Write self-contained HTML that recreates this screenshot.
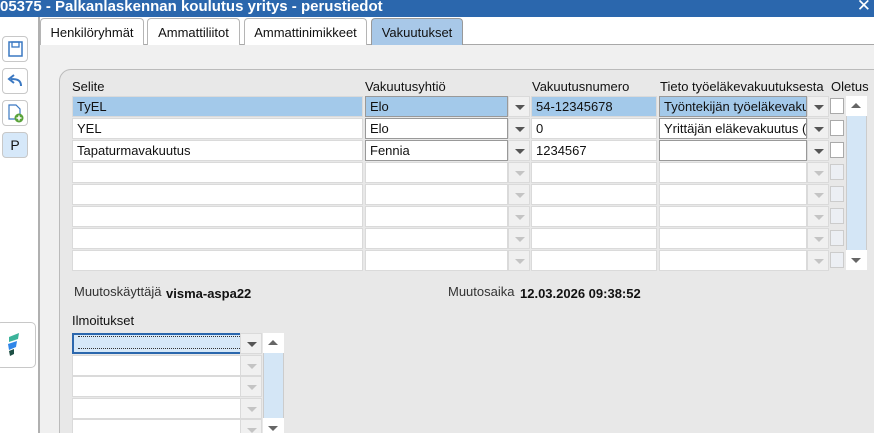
<!DOCTYPE html><html><head><meta charset="utf-8"><style>
*{box-sizing:border-box;margin:0;padding:0}
html,body{width:874px;height:433px;overflow:hidden}
body{background:#fff;font-family:"Liberation Sans",Arial,sans-serif;font-size:13px;color:#111;position:relative}
.a{position:absolute}
.title{left:0;top:0;width:874px;height:17px;background:#2b67ad;color:#fff;font-weight:bold;font-size:15px;line-height:14px;padding-left:0;white-space:nowrap;overflow:hidden}
.tab{top:18px;height:27px;border:1px solid #b5b5b5;border-bottom:none;border-radius:4px 4px 0 0;background:#fff;text-align:center;line-height:27px;font-size:13px}
.btn{left:2px;width:26px;height:26px;border:1px solid #c8c8c8;border-radius:4px;background:#fff}
.cell{height:21px;background:#fff;border:1px solid #dadada;line-height:19px;padding-left:4px;white-space:nowrap;overflow:hidden}
.dd{height:21px;width:22px;background:#f0f0f0;border:1px solid #dadada}
.dd::after{content:"";position:absolute;left:6px;top:8px;border-left:5px solid transparent;border-right:5px solid transparent;border-top:5px solid #555}
.dd.dis::after{border-top-color:#c4c4c4}
.cb{width:14px;height:16px;border:1px solid #aaa;background:#fff}
.cb.dis{background:#eceff4;border-color:#ccc}
</style></head><body>
<div class="a title">05375 - Palkanlaskennan koulutus yritys - perustiedot<span style="position:absolute;right:3px;top:-1px;font-weight:normal;font-size:17px">✕</span></div>
<div class="a" style="left:38px;top:17px;width:2px;height:416px;background:#b0b0b0"></div>
<div class="a btn" style="top:36px"><svg width="24" height="24"><rect x="6" y="5" width="13" height="14" fill="none" stroke="#3a78c2" stroke-width="1.5"/><rect x="9" y="5" width="7" height="5" fill="none" stroke="#3a78c2" stroke-width="1.3"/></svg></div>
<div class="a btn" style="top:68px"><svg width="24" height="24"><path d="M18 17 C18 11 14 10 8 10 M11 6 L6 10 L11 14" fill="none" stroke="#3a78c2" stroke-width="2"/></svg></div>
<div class="a btn" style="top:100px"><svg width="24" height="24"><path d="M6 4h7l4 4v10H6z" fill="#fff" stroke="#3a78c2" stroke-width="1.2"/><circle cx="16" cy="17" r="4.5" fill="#5aa33a"/><path d="M16 14.5v5M13.5 17h5" stroke="#fff" stroke-width="1.5"/></svg></div>
<div class="a btn" style="top:132px;background:#d6e8f9;text-align:center;line-height:24px;font-size:14px">P</div>
<div class="a" style="left:-4px;top:322px;width:40px;height:46px;border:1px solid #c8c8c8;border-radius:5px;background:#fff"><svg width="40" height="46"><path d="M12 14 L22 10 L21 16 L12 19Z" fill="#3bb39a"/><path d="M11 21 L20 18 L19 24 L12 27Z" fill="#2f86e8"/><path d="M12 28 L17 26 L17 31 L13 33Z" fill="#1e4f45"/></svg></div>
<div class="a" style="left:40px;top:44px;width:834px;height:1px;background:#a8a8a8"></div>
<div class="a tab" style="left:40px;width:104px">Henkilöryhmät</div>
<div class="a tab" style="left:147px;width:93px">Ammattiliitot</div>
<div class="a tab" style="left:244px;width:123px">Ammattinimikkeet</div>
<div class="a tab" style="left:371px;width:92px;background:#a8c8e8;border-color:#999">Vakuutukset</div>
<div class="a" style="left:40px;top:45px;width:834px;height:388px;background:#f0f0f0"></div>
<div class="a" style="left:59px;top:69px;width:830px;height:370px;background:#e8e8e8;border:1px solid #bbb;border-radius:12px 0 0 0"></div>
<div class="a" style="left:72px;top:79px">Selite</div>
<div class="a" style="left:365px;top:79px">Vakuutusyhtiö</div>
<div class="a" style="left:532px;top:79px">Vakuutusnumero</div>
<div class="a" style="left:660px;top:79px">Tieto työeläkevakuutuksesta</div>
<div class="a" style="left:831px;top:79px">Oletus</div>
<div id="g"></div>
<div class="a" style="left:846px;top:96px;width:21px;height:174px;background:#d4e6f6;border:1px solid #ccc"></div>
<div class="a" style="left:846px;top:96px;width:21px;height:20px;background:#fff"><div class="a" style="left:5px;top:7px;border-left:5px solid transparent;border-right:5px solid transparent;border-bottom:5px solid #666"></div></div>
<div class="a" style="left:846px;top:250px;width:21px;height:20px;background:#fff"><div class="a" style="left:5px;top:8px;border-left:5px solid transparent;border-right:5px solid transparent;border-top:5px solid #666"></div></div>
<div class="a" style="left:74px;top:284px;color:#333">Muutoskäyttäjä</div>
<div class="a" style="left:166px;top:286px;font-weight:bold">visma-aspa22</div>
<div class="a" style="left:448px;top:284px;color:#333">Muutosaika</div>
<div class="a" style="left:520px;top:286px;font-weight:bold">12.03.2026 09:38:52</div>
<div class="a" style="left:72px;top:313px">Ilmoitukset</div>
<div id="h"></div>
<div class="a" style="left:263px;top:333px;width:21px;height:100px;background:#d4e6f6;border:1px solid #ccc"></div>
<div class="a" style="left:263px;top:333px;width:21px;height:20px;background:#fff"><div class="a" style="left:5px;top:7px;border-left:5px solid transparent;border-right:5px solid transparent;border-bottom:5px solid #666"></div></div>
<div class="a" style="left:263px;top:418px;width:21px;height:20px;background:#fff"><div class="a" style="left:5px;top:8px;border-left:5px solid transparent;border-right:5px solid transparent;border-top:5px solid #666"></div></div>
<script>
var rows=[["TyEL","Elo","54-12345678","Työntekijän työeläkevakuutus"],["YEL","Elo","0","Yrittäjän eläkevakuutus (YEL)"],["Tapaturmavakuutus","Fennia","1234567",""],["","","",""],["","","",""],["","","",""],["","","",""],["","","",""]];
var s="";
rows.forEach(function(r,i){var y=96+i*22;var sel=i==0,act=i<3;var bg=sel?"background:#a3c9ea;":"";var bc=act?"border-color:#999;":"";
s+='<div class="a cell" style="left:72px;top:'+y+'px;width:291px;'+bg+'">'+r[0]+'</div>';
s+='<div class="a cell" style="left:365px;top:'+y+'px;width:143px;'+bg+bc+'">'+r[1]+'</div>';
s+='<div class="a dd'+(act?'':' dis')+'" style="left:508px;top:'+y+'px"></div>';
s+='<div class="a cell" style="left:531px;top:'+y+'px;width:126px;'+bg+'">'+r[2]+'</div>';
s+='<div class="a cell" style="left:659px;top:'+y+'px;width:148px;'+bg+bc+'">'+r[3]+'</div>';
s+='<div class="a dd'+(act?'':' dis')+'" style="left:807px;top:'+y+'px"></div>';
s+='<div class="a cb'+(act?'':' dis')+'" style="left:830px;top:'+(y+2)+'px"></div>';});
document.getElementById("g").innerHTML=s;
var t="";
for(var i=0;i<5;i++){var y=333+i*21.5;
t+='<div class="a cell" style="left:72px;top:'+y+'px;width:169px;'+(i==0?'background:#d6e8f8;border:2px solid #2b67ad;border-right:1px solid #2b67ad;':'')+'">'+(i==0?'<div style="border-top:1px dotted #333;border-bottom:1px dotted #333;height:13px;margin-top:1px"></div>':'')+'</div>';
t+='<div class="a dd'+(i==0?'':' dis')+'" style="left:240px;top:'+y+'px"></div>';}
document.getElementById("h").innerHTML=t;
</script>
</body></html>
